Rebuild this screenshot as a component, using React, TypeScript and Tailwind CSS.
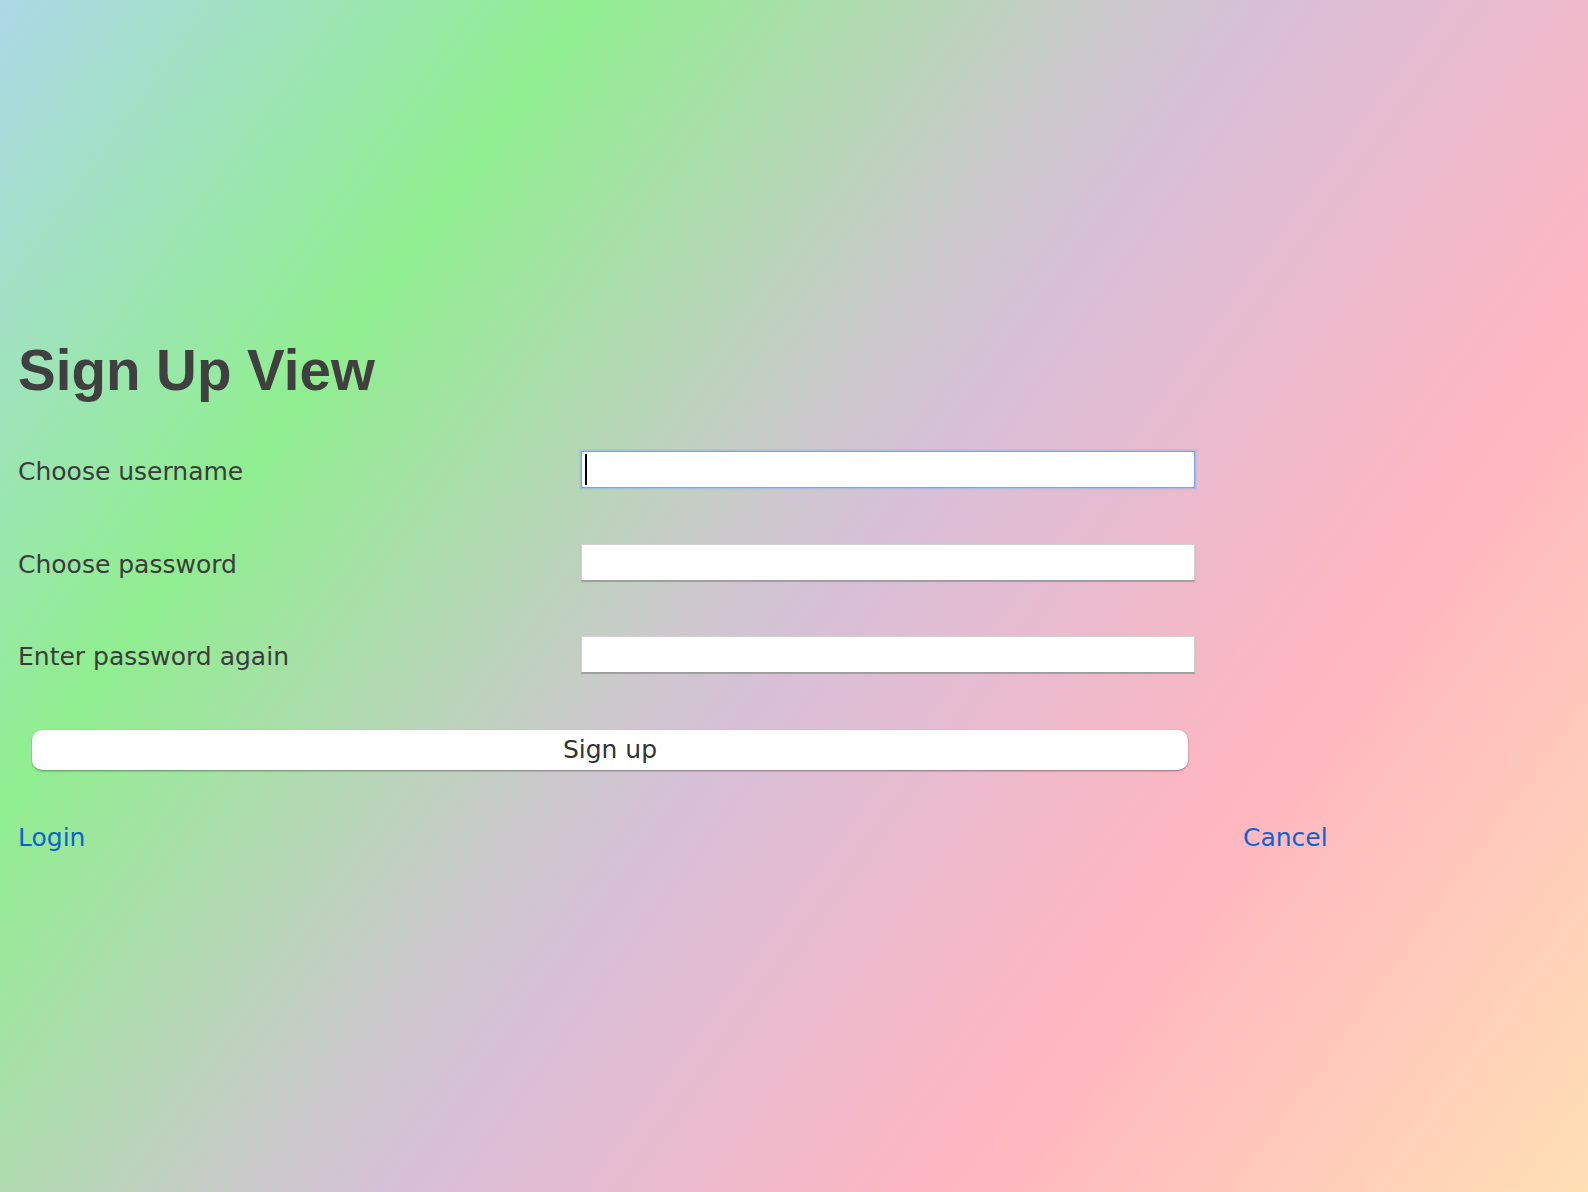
import React from 'react';

const fields = [
  { label: 'Choose username', type: 'text', focused: true },
  { label: 'Choose password', type: 'password', focused: false },
  { label: 'Enter password again', type: 'password', focused: false },
];

export default function App() {
  return (
    <div className="h-screen w-full overflow-hidden bg-[linear-gradient(126deg,#add8e6_0%,#90ee90_24%,#cacaca_45%,#d8bfd8_52%,#ffb6c1_74%,#ffdfb4_100%)]">
      <div className="pl-[18px] pt-[343px] font-['DejaVu_Sans',sans-serif] text-[25px] text-[#3c3c3c]">
        <h1 className="h-[56px] font-['Liberation_Sans',Arial,sans-serif] text-[56.5px] font-bold leading-[56px] text-[#404040]">
          Sign Up View
        </h1>

        {/* Form rows */}
        <div className="mt-[52px] flex flex-col gap-[55.5px]">
          {fields.map((f) => (
            <div key={f.label} className="flex h-[37px] items-center">
              <label className="w-[563px] pt-[5px]">{f.label}</label>
              <div className="relative h-[37px] w-[614px]">
                <input
                  type={f.type}
                  className={
                    f.focused
                      ? 'h-full w-full border border-[#7aa6e2] bg-white caret-transparent shadow-[0_0_0_1.5px_rgba(140,180,240,0.55)] outline-none'
                      : 'h-full w-full border border-[#d2d2d2] border-b-[#9c9c9c] bg-white caret-transparent shadow-[0_1px_1px_rgba(0,0,0,0.18)] outline-none'
                  }
                />
                {f.focused && (
                  <span className="absolute left-[4px] top-[3px] h-[31px] w-[2px] bg-black" />
                )}
              </div>
            </div>
          ))}
        </div>

        {/* Submit */}
        <button className="ml-[14px] mt-[57px] flex h-[40px] w-[1156px] items-center justify-center rounded-[10px] bg-white text-[#333] shadow-[0_1px_2px_rgba(0,0,0,0.4)]">
          Sign up
        </button>

        {/* Links */}
        <div className="mt-[49px] flex text-[#0d63d0]">
          <a className="w-[1225px] cursor-pointer">Login</a>
          <a className="cursor-pointer">Cancel</a>
        </div>
      </div>
    </div>
  );
}
